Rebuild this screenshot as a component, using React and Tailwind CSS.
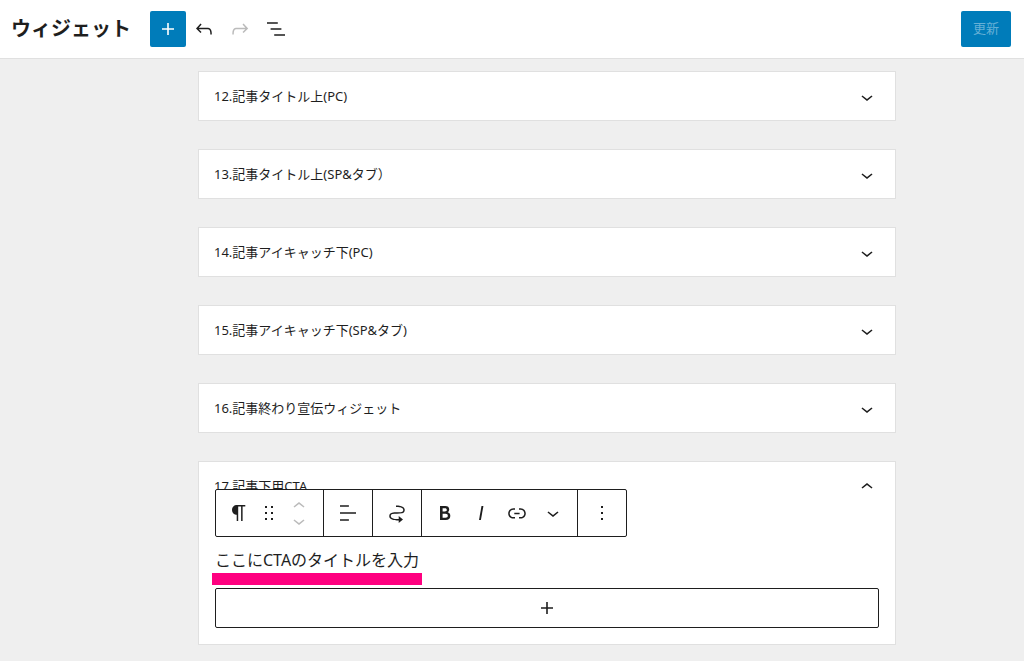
import React, { useState } from "react";

const ICONS = {
  plus: "M18 11.2h-5.2V6h-1.6v5.2H6v1.6h5.2V18h1.6v-5.2H18z",
  undo: "M18.3 11.7c-.6-.6-1.4-.9-2.3-.9H6.7l2.9-3.3-1.1-1-4.5 5L8.5 16l1-1-2.7-2.7H16c.5 0 .9.2 1.3.5 1 1 1 3.4 1 4.5v.3h1.5v-.2c0-1.5 0-4.3-1.5-5.7z",
  redo: "M15.6 6.5l-1.1 1 2.9 3.3H8c-.9 0-1.7.3-2.3.9-1.4 1.5-1.4 4.2-1.4 5.6v.2h1.5v-.3c0-1.1 0-3.5 1-4.5.3-.3.7-.5 1.3-.5h9.2L14.5 15l1.1 1.1 4.6-4.6-4.6-5z",
  listView: "M13.8 5.2H3v1.5h10.8V5.2zm-3.6 12v1.5H21v-1.5H10.2zm7.2-6H6.6v1.5h10.8v-1.5z",
  chevronDown: "M17.5 11.6L12 16l-5.5-4.4.9-1.2L12 14l4.5-3.6 1 1.2z",
  chevronUp: "M6.5 12.4L12 8l5.5 4.4-.9 1.2L12 10l-4.5 3.6-1-1.2z",
  paragraph: "M18.3 4H9.9v-.1l-.9.2c-2.3.4-4 2.4-4 4.8s1.7 4.4 4 4.8l.7.1V20h1.5V5.5h2.9V20h1.5V5.5h2.7V4z",
  drag: "M8 7h2V5H8v2zm0 6h2v-2H8v2zm0 6h2v-2H8v2zm6-14v2h2V5h-2zm0 8h2v-2h-2v2zm0 6h2v-2h-2v2z",
  align: "M4 19.8h8.9v-1.5H4v1.5zm8.9-15.6H4v1.5h8.9V4.2zm-8.9 7v1.5h16v-1.5H4z",
  moveTo:
    "M19.75 9c0-1.257-.565-2.197-1.39-2.858-.797-.64-1.827-1.017-2.815-1.247-1.802-.42-3.703-.403-4.383-.396L11 4.5V6l.177-.001c.696-.006 2.416-.02 4.028.356.887.207 1.67.518 2.216.957.52.416.829.945.829 1.688 0 .592-.167.966-.407 1.23-.255.281-.656.508-1.236.674-1.19.34-2.82.346-4.607.346h-.077c-1.692 0-3.527 0-4.942.404-.732.209-1.424.545-1.935 1.108-.526.579-.796 1.33-.796 2.238 0 1.257.565 2.197 1.39 2.858.797.64 1.827 1.017 2.815 1.247 1.802.42 3.703.403 4.383.396L13 19.5h.714V22L18 18.5 13.714 15v3H13l-.177.001c-.696.006-2.416.02-4.028-.356-.887-.207-1.67-.518-2.216-.957-.52-.416-.829-.945-.829-1.688 0-.592.167-.966.407-1.23.255-.281.656-.508 1.237-.674 1.189-.34 2.819-.346 4.606-.346h.077c1.692 0 3.527 0 4.941-.404.732-.209 1.425-.545 1.936-1.108.526-.579.796-1.33.796-2.238z",
  bold: "M14.7 11.3c1-.6 1.5-1.6 1.5-3 0-2.3-1.3-3.4-4-3.4H7v14h5.8c1.4 0 2.5-.3 3.3-1 .8-.7 1.2-1.7 1.2-2.9.1-1.9-.8-3.1-2.6-3.7zm-5.1-4h2.3c.6 0 1.1.1 1.4.4.3.3.5.7.5 1.2s-.2 1-.5 1.2c-.3.3-.8.4-1.4.4H9.6V7.3zm4.6 9c-.4.3-1 .4-1.7.4H9.6v-3.9h2.9c.7 0 1.3.2 1.7.5.4.3.6.8.6 1.5s-.2 1.2-.6 1.5z",
  italic: "M12.5 5L10 19h1.9l2.5-14z",
  link: "M15.6 7.2H14v1.5h1.6c2 0 3.7 1.7 3.7 3.7s-1.7 3.7-3.7 3.7H14v1.5h1.6c2.8 0 5.2-2.3 5.2-5.2 0-2.9-2.3-5.2-5.2-5.2zM4.7 12.4c0-2 1.7-3.7 3.7-3.7H10V7.2H8.4c-2.9 0-5.2 2.3-5.2 5.2 0 2.9 2.3 5.2 5.2 5.2H10v-1.5H8.4c-2 0-3.7-1.7-3.7-3.7zm4.6.9h5.3v-1.5H9.3v1.5z",
  more: "M13 19h-2v-2h2v2zm0-6h-2v-2h2v2zm0-6h-2V5h2v2z",
};

const Icon = ({ name, className = "size-6" }) => (
  <svg viewBox="0 0 24 24" fill="currentColor" className={className} aria-hidden="true">
    <path d={ICONS[name]} />
  </svg>
);

const IconButton = ({ icon, label, className = "w-9", disabled }) => (
  <button
    type="button"
    aria-label={label}
    disabled={disabled}
    className={`flex h-9 items-center justify-center disabled:text-[#bbbbbb] ${className}`}
  >
    <Icon name={icon} />
  </button>
);

const AREAS = [
  "12.記事タイトル上(PC)",
  "13.記事タイトル上(SP&タブ）",
  "14.記事アイキャッチ下(PC)",
  "15.記事アイキャッチ下(SP&タブ)",
  "16.記事終わり宣伝ウィジェット",
  "17.記事下用CTA",
];

const Header = () => (
  <header className="flex h-[59px] items-center justify-between border-b border-[#e0e0e0] bg-white pr-[13px] pl-[11px]">
    <div className="flex items-center">
      <h1 className="mr-[19px] text-xl font-semibold">ウィジェット</h1>
      <button
        type="button"
        aria-label="ブロックを追加"
        className="flex size-9 items-center justify-center rounded-xs bg-[#007cba] text-white"
      >
        <Icon name="plus" />
      </button>
      <IconButton icon="undo" label="元に戻す" />
      <IconButton icon="redo" label="やり直す" disabled />
      <IconButton icon="listView" label="リスト表示" />
    </div>
    <button type="button" disabled className="h-9 rounded-xs bg-[#007cba] px-3 text-[13px] text-[#66b0d6]">
      更新
    </button>
  </header>
);

// Floats over the heading of the open area
const BlockToolbar = () => (
  <div
    role="toolbar"
    aria-label="ブロックツール"
    className="absolute top-[27px] left-4 flex h-12 items-center divide-x divide-[#1e1e1e] rounded-xs border border-[#1e1e1e] bg-white"
  >
    <div className="flex h-full items-center pr-1.5 pl-[5px]">
      <IconButton icon="paragraph" label="段落" />
      <IconButton icon="drag" label="ドラッグ" className="w-6" />
      <div className="flex w-9 flex-col items-center text-[#bbbbbb]">
        <button type="button" aria-label="上に移動" disabled className="flex h-[15px] items-center overflow-hidden">
          <Icon name="chevronUp" className="size-6 shrink-0" />
        </button>
        <button type="button" aria-label="下に移動" disabled className="flex h-[15px] items-center overflow-hidden">
          <Icon name="chevronDown" className="size-6 shrink-0" />
        </button>
      </div>
    </div>
    <div className="flex h-full items-center px-1.5">
      <IconButton icon="align" label="配置" />
    </div>
    <div className="flex h-full items-center px-1.5">
      <IconButton icon="moveTo" label="ウィジェットエリアに移動" />
    </div>
    <div className="flex h-full items-center pr-1.5 pl-[5px]">
      <IconButton icon="bold" label="太字" />
      <IconButton icon="italic" label="イタリック" />
      <IconButton icon="link" label="リンク" />
      <IconButton icon="chevronDown" label="さらに表示" />
    </div>
    <div className="flex h-full items-center px-1.5">
      <IconButton icon="more" label="オプション" />
    </div>
  </div>
);

const WidgetArea = ({ title, open, onToggle }) => (
  <section className="relative border border-[#e0e0e0] bg-white">
    <h2>
      <button
        type="button"
        aria-expanded={open}
        onClick={onToggle}
        className="flex h-12 w-full items-center justify-between pt-0.5 pr-4 pl-[15px] text-left text-[13px]"
      >
        {title}
        <Icon name={open ? "chevronUp" : "chevronDown"} />
      </button>
    </h2>
    {open && (
      <>
        <BlockToolbar />
        <div className="px-4 pt-[38px] pb-4">
          <p className="text-base leading-6">ここにCTAのタイトルを入力</p>
          <div className="mt-px -ml-[3px] h-3 w-[210px] bg-[#ff0080]" />
          <button
            type="button"
            aria-label="ブロックを追加"
            className="mt-[3px] flex h-10 w-full items-center justify-center rounded-xs border border-[#1e1e1e]"
          >
            <Icon name="plus" />
          </button>
        </div>
      </>
    )}
  </section>
);

const App = () => {
  const [openArea, setOpenArea] = useState(AREAS.length - 1);

  return (
    <div className="min-h-screen bg-[#efefef] font-['Noto_Sans','Noto_Sans_CJK_JP',sans-serif] text-[#1e1e1e]">
      <Header />
      <main className="pt-3 pl-[70px]">
        <div className="mx-auto flex max-w-[698px] flex-col gap-7">
          {AREAS.map((title, index) => (
            <WidgetArea
              key={title}
              title={title}
              open={openArea === index}
              onToggle={() => setOpenArea(openArea === index ? -1 : index)}
            />
          ))}
        </div>
      </main>
    </div>
  );
};

export default App;
